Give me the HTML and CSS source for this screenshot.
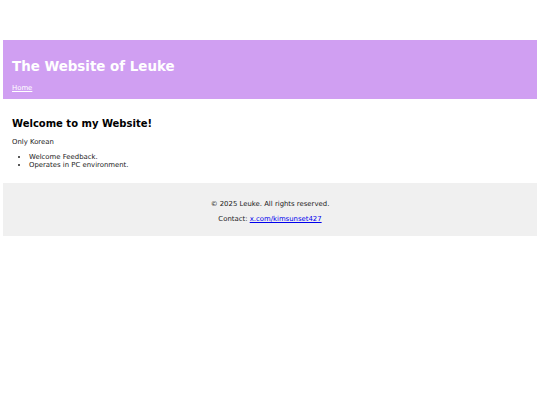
FILE: index.html
```html
<!DOCTYPE html>
<html lang="en">
<head>
    <meta charset="UTF-8">
    <meta name="viewport" content="width=device-width, initial-scale=1.0">
    <title>The Website of Leuke</title>
    <link rel="stylesheet" href="styles.css">
</head>
<body>
    <header class="site-header">
        <h1 class="site-title">The Website of Leuke</h1>
        <nav class="site-nav">
            <a href="#">Home</a>
        </nav>
    </header>

    <main class="site-main">
        <h2 class="welcome-title">Welcome to my Website!</h2>
        <p class="welcome-text">Only Korean</p>
        <ul class="welcome-list">
            <li>Welcome Feedback.</li>
            <li>Operates in PC environment.</li>
        </ul>
    </main>

    <footer class="site-footer">
        <p>&copy; 2025 Leuke. All rights reserved.</p>
        <p>Contact: <a href="#">x.com/kimsunset427</a></p>
    </footer>
</body>
</html>
```

FILE: styles.css
```css
body {
    font-family: "DejaVu Sans", Verdana, sans-serif;
    font-size: 6.9px;
    margin: 0;
    padding: 40px 3px 0;
    color: #222;
    background: #fff;
}

.site-header {
    background: #d09ff2;
    color: white;
    padding: 19px 9px 7px;
}

.site-title {
    margin: 0 0 9.6px;
    font-size: 13.4px;
}

.site-nav a {
    color: white;
}

.site-main {
    padding: 19.7px 9px 14px;
}

.welcome-title {
    margin: 0 0 9.2px;
    font-size: 10px;
    color: #000;
}

.welcome-text {
    margin: 0 0 7px;
}

.welcome-list {
    margin: 0;
    padding-left: 17px;
}

.site-footer {
    background: #f0f0f0;
    text-align: center;
    padding: 16.5px 0 13.5px;
}

.site-footer p {
    margin: 0 0 7px;
}

.site-footer p:last-child {
    margin: 0;
}

.site-footer a {
    color: #0000ee;
}
```
